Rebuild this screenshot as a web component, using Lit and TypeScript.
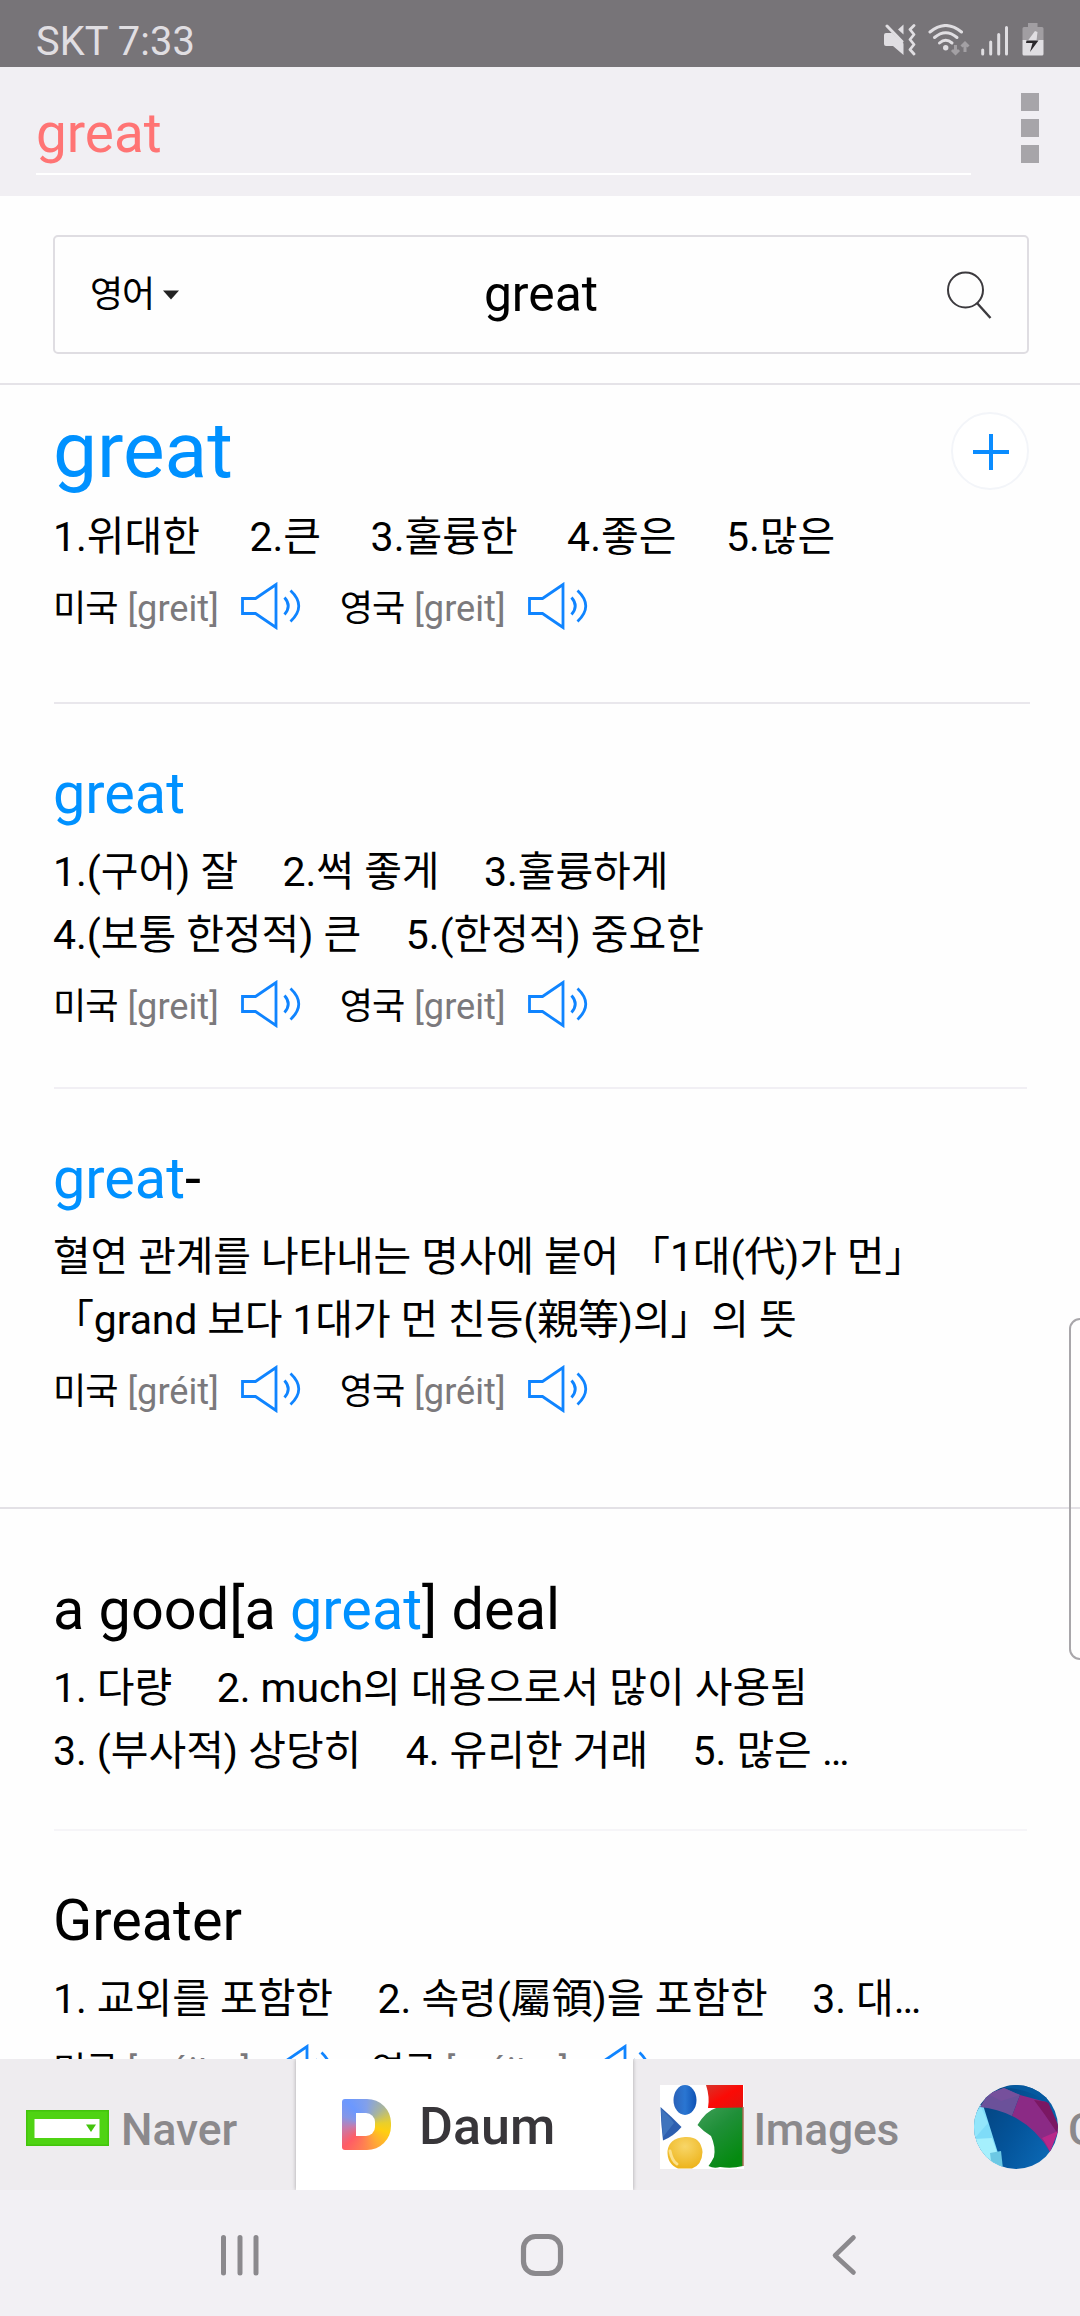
import { LitElement, html, css } from "lit";
import { customElement, property } from "lit/decorators.js";

type Part = { t: string; hit?: boolean };
type Entry = {
  kind: string;
  add?: boolean;
  title: Part[];
  lines: string[][];
  pron?: string;
};

const ENTRIES: Entry[] = [
  { kind: "main", add: true, title: [{ t: "great", hit: true }], lines: [["1.위대한", "2.큰", "3.훌륭한", "4.좋은", "5.많은"]], pron: "[greit]" },
  { kind: "second", title: [{ t: "great", hit: true }], lines: [["1.(구어) 잘", "2.썩 좋게", "3.훌륭하게"], ["4.(보통 한정적) 큰", "5.(한정적) 중요한"]], pron: "[greit]" },
  { kind: "prefix", title: [{ t: "great", hit: true }, { t: "-" }], lines: [["혈연 관계를 나타내는 명사에 붙어 「1대(代)가 먼」"], ["「grand 보다 1대가 먼 친등(親等)의」의 뜻"]], pron: "[gréit]" },
  { kind: "idiom", title: [{ t: "a good[a " }, { t: "great", hit: true }, { t: "] deal" }], lines: [["1. 다량", "2. much의 대용으로서 많이 사용됨"], ["3. (부사적) 상당히", "4. 유리한 거래", "5. 많은 …"]] },
  { kind: "last", title: [{ t: "Greater" }], lines: [["1. 교외를 포함한", "2. 속령(屬領)을 포함한", "3. 대…"]], pron: "[gréitər]" },
];

const speaker = html`<svg class="spk" viewBox="0 0 60 48" width="60" height="48">
  <path d="M1.500 16.500H14.500L35 2.500V45.500L14.500 31.500H1.500Z" fill="none" stroke="#0f84ff" stroke-width="2.800"/>
  <path d="M43.500 15.500Q51 24 43.500 32.500M49.500 8.500Q66 24 49.500 39.500" fill="none" stroke="#0f84ff" stroke-width="2.800"/>
</svg>`;

@customElement("word-entry")
export class WordEntry extends LitElement {
  @property({ attribute: false }) entry!: Entry;
  static styles = css`
    :host { display: block; flex: none; }
    .entry { position: relative; box-sizing: border-box; padding-left: 53px; }
    .title { font-size: 57.6px; line-height: 68px; white-space: pre; }
    .hit { color: #0091ff; }
    .lines { margin-top: 13px; }
    .line { display: flex; gap: 44.5px; line-height: 63px; font-size: 41px; letter-spacing: -0.05px; white-space: pre; }
    .pron { display: flex; align-items: center; margin-top: 10px; line-height: 60px; font-size: 36.2px; white-space: pre; }
    .lang { letter-spacing: -1px; width: 74.5px; }
    .ipa { color: #7b797c; margin-right: 22px; }
    .spk { margin-right: 39px; margin-top: -6px; flex: none; }
    .add { position: absolute; left: 951px; top: 27px; }
    .rule { height: 2px; }
    .main { padding-top: 19px; height: 317px; }
    .main .title { font-size: 78.5px; line-height: 92px; }
    .main .lines { margin-top: 10px; }
    .main .line { gap: 49.5px; letter-spacing: 0; }
    .second { padding-top: 56px; height: 383px; }
    .prefix { padding-top: 56px; height: 418px; }
    .prefix .line { letter-spacing: -0.15px; }
    .idiom { padding-top: 67px; height: 320px; }
    .last { padding-top: 56px; height: 228px; }
    .rule-main { margin: 0 50px 0 54px; background: #e9e7ec; }
    .rule-second { margin: 0 53px 0 54px; background: #f1eff4; }
    .rule-prefix { background: #e3e1e6; }
    .rule-idiom { margin: 0 53px 0 54px; background: #f6f5f8; }
  `;
  render() {
    const e = this.entry;
    return html`<div class="entry ${e.kind}">
      <div class="title">${e.title.map((p) => html`<span class=${p.hit ? "hit" : ""}>${p.t}</span>`)}</div>
      ${e.add
        ? html`<svg class="add" width="78" height="78" viewBox="0 0 78 78"><circle cx="39" cy="39" r="38" fill="#fff" stroke="#f3f5f9" stroke-width="2"/><path d="M22 40H58M40 22V58" stroke="#0a8cff" stroke-width="4"/></svg>`
        : ""}
      <div class="lines">${e.lines.map((l) => html`<div class="line">${l.map((s) => html`<span>${s}</span>`)}</div>`)}</div>
      ${e.pron
        ? html`<div class="pron"><span class="lang">미국</span><span class="ipa">${e.pron}</span>${speaker}<span class="lang">영국</span><span class="ipa">${e.pron}</span>${speaker}</div>`
        : ""}
    </div>
    ${e.kind === "last" ? "" : html`<div class="rule rule-${e.kind}"></div>`}`;
  }
}

@customElement("status-bar")
export class StatusBar extends LitElement {
  static styles = css`
    :host { display: flex; flex: none; box-sizing: border-box; height: 67px; background: #777478; color: #e0dee2; align-items: flex-start; justify-content: space-between; padding: 0 36px 0 36px; }
    .clock { font-size: 39.8px; line-height: 46px; padding-top: 19px; letter-spacing: 0.1px; }
    .icons { display: flex; padding-top: 24px; align-items: flex-start; }
    .wifi { margin-left: 12px; }
    .signal { margin-left: 10px; }
    .battery { margin-left: 13px; margin-top: -1px; }
  `;
  render() {
    return html`<div class="clock">SKT 7:33</div>
      <div class="icons">
        <svg width="32" height="32" viewBox="0 0 32 32"><path d="M2 9H8L19.500 19.500V31L9 22H2Q0 22 0 20V11Q0 9 2 9Z" fill="#e0dee2"/><path d="M3 2L18 17.500" stroke="#e0dee2" stroke-width="3" stroke-linecap="round"/><path d="M14 5.500L19.500 .5V10.500Z" fill="#e0dee2"/><path d="M30 1.500L26 5.500L30 10.500L26 15.500L30 20.500L26 25.500L30 30" fill="none" stroke="#e0dee2" stroke-width="2.800" stroke-linejoin="round" stroke-linecap="round"/></svg>
        <svg class="wifi" width="43" height="32" viewBox="0 0 43 32"><g fill="none" stroke="#e0dee2" stroke-width="3" stroke-linecap="round"><path d="M2 8Q17.700 -5 33.500 8"/><path d="M6.500 13.500Q17.700 4 29 13.500"/><path d="M11.500 19Q17.700 13.500 24 19"/></g><circle cx="17.700" cy="23.700" r="2.700" fill="#e0dee2"/><path d="M27.500 21V29M24 26L27.500 29.500L31 26M37 28V19.500M33.500 22.500L37 19L40.500 22.500" fill="none" stroke="#a3a0a4" stroke-width="3"/></svg>
        <svg class="signal" width="28" height="32" viewBox="0 0 28 32"><path d="M1.700 26V30M9.700 18V30M17.700 10.500V30M25.500 3.500V30" stroke="#e0dee2" stroke-width="3" stroke-linecap="round"/></svg>
        <svg class="battery" width="22" height="33" viewBox="0 0 22 33"><path d="M6 0H15.500V4H20Q21.500 4 21.500 5.500V17H.5V5.500Q.5 4 2 4H6Z" fill="#a19ea2"/><path d="M.5 17H21.500V31Q21.500 32.500 20 32.500H2Q.5 32.500 .5 31Z" fill="#e0dee2"/><path d="M13 8L6 17.500H14.500L15.500 9Z" fill="#e0dee2"/><path d="M4.500 17.500H16.500L8 29L10.500 20H4Z" fill="#2b282c"/></svg>
      </div>`;
  }
}

@customElement("search-header")
export class SearchHeader extends LitElement {
  static styles = css`
    :host { display: block; flex: none; }
    .bar { display: flex; justify-content: space-between; height: 129px; box-sizing: border-box; background: #f1eff3; padding: 26px 41px 0 36px; }
    .query { width: 935px; height: 82px; box-sizing: border-box; padding-top: 10px; border-bottom: 2px solid #fff; color: #ff7474; font-size: 54.8px; line-height: 60px; }
    .menu { display: flex; flex-direction: column; gap: 8px; }
    .dot { width: 18px; height: 18px; background: #a7a5a9; }
    .area { height: 189px; box-sizing: border-box; padding: 39px 51px 0 53px; border-bottom: 2px solid #e5e3e8; }
    .box { display: grid; grid-template-columns: 1fr auto 1fr; align-items: center; height: 119px; box-sizing: border-box; border: 2px solid #dfdde2; border-radius: 5px; padding: 0 35px; }
    .lang { display: flex; align-items: center; gap: 9px; font-size: 36px; letter-spacing: -1px; line-height: 60px; }
    .word { font-size: 49.8px; line-height: 60px; padding-bottom: 2px; }
    .find { justify-self: end; }
  `;
  render() {
    return html`<div class="bar"><div class="query">great</div><div class="menu"><div class="dot"></div><div class="dot"></div><div class="dot"></div></div></div>
      <div class="area"><div class="box">
        <div class="lang"><span>영어</span><svg width="16" height="10" viewBox="0 0 16 10"><path d="M0 .5H16L8 9.500Z" fill="#222"/></svg></div>
        <div class="word">great</div>
        <svg class="find" width="46" height="48" viewBox="0 0 46 48"><circle cx="19.500" cy="19" r="17.500" fill="none" stroke="#3c3a3e" stroke-width="2"/><path d="M31 32L44.500 47" stroke="#3c3a3e" stroke-width="2.400"/></svg>
      </div></div>`;
  }
}

@customElement("site-tabs")
export class SiteTabs extends LitElement {
  static styles = css`
    :host { display: flex; flex: none; height: 131px; background: #eeecef; overflow: hidden; color: #8b898c; font-weight: 500; font-size: 44.4px; }
    .tab { display: flex; align-items: center; box-sizing: border-box; height: 131px; flex: none; white-space: nowrap; line-height: 60px; }
    .label { padding-top: 10px; }
    .naver { width: 296px; padding-left: 26px; gap: 12px; }
    .naver svg { margin-top: 7px; }
    .daum { position: relative; width: 337px; padding-left: 46px; background: #fff; color: #38363a; font-size: 52px; box-shadow: 0 0 4px rgba(0, 0, 0, 0.3); }
    .daum .label { padding-top: 5px; margin-left: 28px; }
    .mark { display: flex; align-items: center; box-sizing: border-box; width: 49px; height: 51px; padding-left: 14px; border-radius: 3px 24px 24px 3px; background: conic-gradient(#82a0ea, #a9b59a 45deg, #e9cf2c 85deg, #ffcf10 110deg, #ffab35 150deg, #ff8350 185deg, #ff5c66 225deg, #c47cae 262deg, #8596e6 290deg, #6b98ff 320deg, #82a0ea); }
    .hole { width: 19px; height: 23px; background: #fff; border-radius: 0 9px 9px 0; }
    .images { width: 341px; padding-left: 27px; gap: 9.5px; letter-spacing: -0.2px; }
    .images svg, .gem { margin-top: 4px; }
    .more { gap: 10px; }
  `;
  render() {
    return html`<div class="tab naver"><svg width="83" height="36" viewBox="0 0 83 36"><rect width="83" height="36" fill="#43c40c"/><rect x="1.500" y="1.500" width="80" height="33" fill="#4fd313"/><rect x="8.500" y="9" width="65" height="19" fill="#fff"/><path d="M60 14.500H70L65 22Z" fill="#43c40c"/></svg><span class="label">Naver</span></div>
      <div class="tab daum"><div class="mark"><div class="hole"></div></div><span class="label">Daum</span></div>
      <div class="tab images"><svg width="84" height="84" viewBox="0 0 84 84">
        <defs>
          <linearGradient id="gr" x1="0" y1="0" x2="1" y2="1"><stop offset="0" stop-color="#d8342a"/><stop offset=".5" stop-color="#fb0a06"/><stop offset="1" stop-color="#e0140e"/></linearGradient>
          <linearGradient id="gg" x1="0" y1="0" x2=".6" y2="1"><stop offset="0" stop-color="#3f9f58"/><stop offset=".45" stop-color="#1f8f38"/><stop offset="1" stop-color="#058a10"/></linearGradient>
          <radialGradient id="gy" cx=".5" cy=".3" r=".7"><stop offset="0" stop-color="#f8d668"/><stop offset="1" stop-color="#edb41c"/></radialGradient>
          <linearGradient id="gb"><stop offset="0" stop-color="#2b62b8"/><stop offset=".5" stop-color="#2a76d2"/><stop offset="1" stop-color="#0f52b4"/></linearGradient>
        </defs>
        <rect width="84" height="84" fill="#fff"/>
        <path d="M46 0H83V23L48 23Q50 12 46 0Z" fill="url(#gr)"/>
        <path d="M83 22.500L56 23Q46 26 37.500 40Q44 47 51 51Q56 62 54 72Q51 78 48.500 81Q54 84 60 82Q72 84 83 81Z" fill="url(#gg)"/>
        <path d="M83 22V81" stroke="#a66a50" stroke-width="1.500"/>
        <ellipse cx="25" cy="15" rx="11.500" ry="15" fill="url(#gb)"/>
        <path d="M.5 22Q12 32 21.500 42Q14 51 3 55.500Q1 40 .5 22Z" fill="#2e5faf"/>
        <path d="M1 24Q10 32 14 38L3 52Z" fill="#3f74bd"/>
        <path d="M25 52Q41 51 42.500 67Q42 80 32 83.500H18Q7 79 7.500 66Q9 53 25 52Z" fill="url(#gy)"/>
        <path d="M10 66Q12 76 17 79" fill="none" stroke="#fbe08a" stroke-width="3" stroke-linecap="round"/>
      </svg><span class="label">Images</span></div>
      <div class="tab more"><svg class="gem" width="84" height="84" viewBox="0 0 84 84">
        <defs>
          <clipPath id="c"><circle cx="42" cy="42" r="42"/></clipPath>
          <linearGradient id="n" x1="0" y1="0" x2="1" y2=".6"><stop offset="0" stop-color="#043f78"/><stop offset=".6" stop-color="#04549a"/><stop offset="1" stop-color="#0a66b2"/></linearGradient>
        </defs>
        <g clip-path="url(#c)">
          <rect width="84" height="84" fill="url(#n)"/>
          <path d="M0 20H9L29 84H0Z" fill="#7fdcf8"/>
          <path d="M0 54L18 53L29 84H10Z" fill="#a5f0fd"/>
          <path d="M0 30L7 22L14 38L0 54Z" fill="#93e6fb"/>
          <path d="M18 84L16 68L27 66L29 84Z" fill="#6cc8e4"/>
          <path d="M6 22L14 9L30 3L46 10L38 31Q24 24 6 22Z" fill="#6b519a"/>
          <path d="M14 9L30 3L46 10L27 16Z" fill="#76509c"/>
          <path d="M46 10L72 17L84 47L76 67Q62 43 38 31Z" fill="#8b2a85"/>
          <path d="M60 15L74 17L86 44V52L71 30Z" fill="#7b1763"/>
          <path d="M84 46L76 67Q72 58 68 53Z" fill="#b8288a"/>
          <path d="M30 3Q55 3 74 18L84 10L60 0H36Z" fill="#05599f"/>
        </g>
      </svg><span class="label">C</span></div>`;
  }
}

@customElement("nav-bar")
export class NavBar extends LitElement {
  static styles = css`
    :host { display: flex; flex: none; box-sizing: border-box; height: 126px; background: #f2f0f4; align-items: flex-start; padding: 43px 0 0 219px; }
    .home { margin-left: 259px; }
    .back { margin-left: 265px; }
  `;
  render() {
    return html`<svg width="42" height="44" viewBox="0 0 42 44"><path d="M4.500 4.500V40M21 4.500V40M37 4.500V40" stroke="#8b898d" stroke-width="5" stroke-linecap="round"/></svg>
      <svg class="home" width="44" height="44" viewBox="0 0 44 44"><rect x="3.500" y="3.500" width="37" height="37" rx="12" fill="none" stroke="#8b898d" stroke-width="5.200"/></svg>
      <svg class="back" width="30" height="44" viewBox="0 0 30 44"><path d="M24.500 4.500L6 22.500L24.500 39.500" fill="none" stroke="#8b898d" stroke-width="4.600" stroke-linecap="round" stroke-linejoin="round"/></svg>`;
  }
}

@customElement("app-root")
export class AppRoot extends LitElement {
  static styles = css`
    :host { display: block; width: 1080px; height: 2316px; font-family: Roboto, "Noto Sans CJK KR", sans-serif; color: #000; }
    .page { position: relative; width: 1080px; height: 2316px; display: flex; flex-direction: column; overflow: hidden; background: #fefefe; }
    .results { flex: 1; min-height: 0; overflow: hidden; }
    .handle { position: absolute; right: -12px; top: 1318px; width: 23px; height: 342px; box-sizing: border-box; border: 2px solid #a8a6aa; border-radius: 11px; }
  `;
  render() {
    return html`<div class="page">
      <status-bar></status-bar>
      <search-header></search-header>
      <div class="results">${ENTRIES.map((e) => html`<word-entry .entry=${e}></word-entry>`)}</div>
      <site-tabs></site-tabs>
      <nav-bar></nav-bar>
      <div class="handle"></div>
    </div>`;
  }
}
